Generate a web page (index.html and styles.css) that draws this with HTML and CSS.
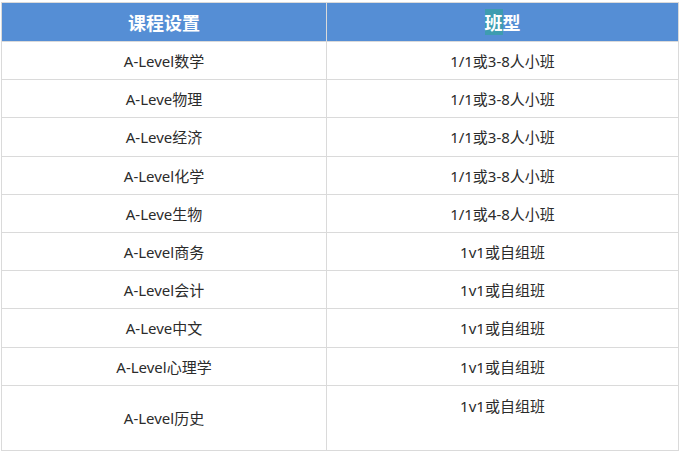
FILE: index.html
```html
<!DOCTYPE html>
<html lang="zh-CN">
<head>
<meta charset="utf-8">
<title>课程设置</title>
<link rel="stylesheet" href="styles.css">
</head>
<body>
<table class="course-table">
  <colgroup>
    <col class="col-a">
    <col class="col-b">
  </colgroup>
  <thead>
    <tr>
      <th>课程设置</th>
      <th><span class="hl">班</span>型</th>
    </tr>
  </thead>
  <tbody>
    <tr><td>A-Level数学</td><td>1/1或3-8人小班</td></tr>
    <tr><td>A-Leve物理</td><td>1/1或3-8人小班</td></tr>
    <tr><td>A-Leve经济</td><td>1/1或3-8人小班</td></tr>
    <tr><td>A-Level化学</td><td>1/1或3-8人小班</td></tr>
    <tr><td>A-Leve生物</td><td>1/1或4-8人小班</td></tr>
    <tr><td>A-Level商务</td><td>1v1或自组班</td></tr>
    <tr><td>A-Level会计</td><td>1v1或自组班</td></tr>
    <tr><td>A-Leve中文</td><td>1v1或自组班</td></tr>
    <tr><td>A-Level心理学</td><td>1v1或自组班</td></tr>
    <tr class="tall"><td>A-Level历史</td><td class="top">1v1或自组班</td></tr>
  </tbody>
</table>
</body>
</html>
```
FILE: styles.css
```css
html, body {
  margin: 0;
  padding: 0;
  background: #ffffff;
}
body {
  padding: 2px 0 0 1px;
  font-family: "Noto Sans", "Noto Sans CJK SC", sans-serif;
}
.course-table {
  border-collapse: collapse;
  width: 677px;
  table-layout: fixed;
}
.col-a { width: 325px; }
.col-b { width: 352px; }
.course-table th,
.course-table td {
  border: 1px solid #dadada;
  text-align: center;
  padding: 0;
}
.course-table th {
  background: #558ed5;
  color: #ffffff;
  font-family: "Noto Sans CJK SC", sans-serif;
  font-size: 18px;
  font-weight: 700;
  height: 38px;
  line-height: 24px;
}
.hl {
  background: #3e9cb0;
}
.course-table td {
  font-size: 15px;
  color: #2b2b2b;
  height: 36.2px;
  line-height: 20px;
  padding-top: 1px;
}
.course-table tr.tall td {
  height: 63px;
}
.course-table tr.tall td.top {
  vertical-align: top;
  height: 54px;
  padding-top: 10px;
}
```
